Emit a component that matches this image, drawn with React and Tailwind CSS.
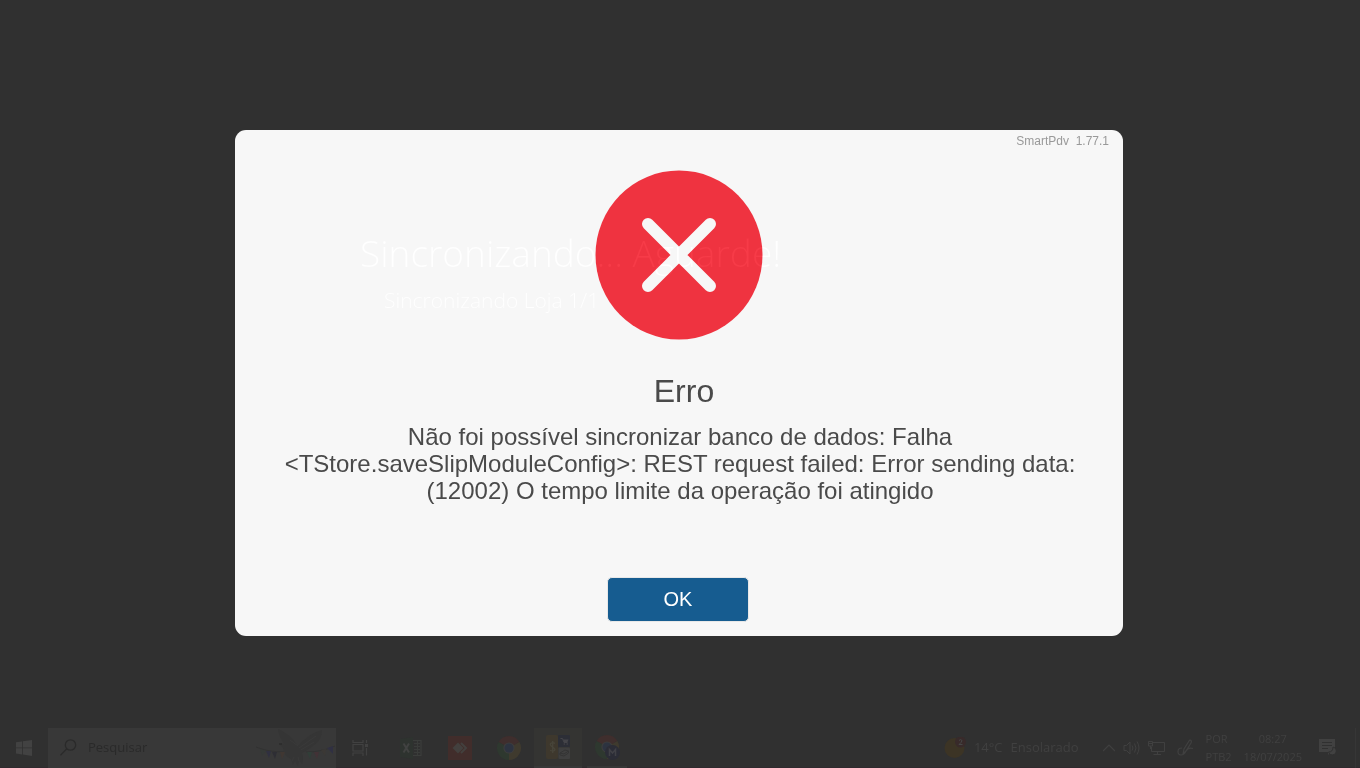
const MESSAGE = [
  'Não foi possível sincronizar banco de dados: Falha',
  '<TStore.saveSlipModuleConfig>: REST request failed: Error sending data:',
  '(12002) O tempo limite da operação foi atingido',
]

function ErrorIcon() {
  return (
    <svg width="168" height="170" viewBox="0 0 168 170" aria-hidden="true">
      <ellipse cx="84" cy="85" rx="83.5" ry="84.5" fill="#ef3340" />
      <path d="M53 54 115 116M115 54 53 116" stroke="#f7f7f7" strokeWidth="12" strokeLinecap="round" />
    </svg>
  )
}

function WindowsIcon() {
  return (
    <svg width="16" height="16" viewBox="0 0 16 16" fill="#424242">
      <path d="M0 2.3 6 1.4V7.4H0zM6.8 1.3 16 0V7.4H6.8zM0 8.2H6V14.4L0 13.6zM6.8 8.2H16V16L6.8 14.6z" />
    </svg>
  )
}

function SearchIcon() {
  return (
    <svg width="17" height="17" viewBox="0 0 17 17" fill="none" stroke="#2a2a2a" strokeWidth="1.3">
      <circle cx="10.5" cy="6" r="5.2" />
      <path d="M6.8 9.8.5 16.2" />
    </svg>
  )
}

function DoveArt() {
  return (
    <svg className="shrink-0" width="80" height="40" viewBox="0 0 80 40">
      <path d="M0 19Q12 24 28 24M50 24Q66 24 79 18" fill="none" stroke="#323232" />
      <path d="M23 16Q27 14 30 18Q23 10 22 1Q34 6 42 18Q52 6 66 2Q66 12 57 18Q52 22 46 25Q48 31 46 36L43 32 42 38 39 33 37 37 35 31Q28 28 27 20Q25 18 23 16z" fill="#353535" />
      <path d="M42 18 34 12M43 20 60 8M45 22 58 14M38 29 36 33M42 29 43 33" stroke="#3a3a3a" />
      <path d="M23 16H26" stroke="#262626" />
      <path d="M4 21 10 23 6 28z" fill="#353937" />
      <path d="M10 23H15L13 30z" fill="#303040" />
      <path d="M16 24H21L19 31z" fill="#2e2e34" />
      <path d="M24 24H29L26 31z" fill="#403732" />
      <path d="M51 24H56L54 31z" fill="#313e38" />
      <path d="M58 24H63L61 31z" fill="#423236" />
      <path d="M65 22 70 21 69 28z" fill="#3b3835" />
      <path d="M71 20 77 18V26z" fill="#303042" />
    </svg>
  )
}

function TaskViewIcon() {
  return (
    <svg width="17" height="16" viewBox="0 0 17 16" fill="none" stroke="#414141" strokeWidth="1.2">
      <path d="M1 0V2.5H11V0M1 16V13H11V16M1 4.5H11V11H1zM14.5 0V3M14.5 8V15.5" />
      <path d="M13 4H16V7H13z" fill="#414141" stroke="none" />
    </svg>
  )
}

function ExcelIcon() {
  return (
    <svg width="24" height="22" viewBox="0 0 24 22">
      <path d="M14 3.5H22V18.5H14" fill="none" stroke="#3b3d3b" strokeWidth="1.2" />
      <path d="M15 6.5H21M15 9.5H21M15 12.5H21M15 15.5H21M18.5 4V18" stroke="#3a3c3a" />
      <path d="M1 2 14 0V22L1 20z" fill="#2e332f" />
      <path d="M4.5 6.5 10 15.5M10 6.5 4.5 15.5" stroke="#414241" strokeWidth="2" />
    </svg>
  )
}

function AnyDeskIcon() {
  return (
    <svg width="24" height="24" viewBox="0 0 24 24">
      <path d="M0 0H24V24H0z" fill="#412d2b" />
      <path d="M4.5 12 10 6.5 15.5 12 10 17.5z" fill="#43403e" />
      <path d="M13 7 18 12 13 17" fill="none" stroke="#43403e" strokeWidth="2" />
    </svg>
  )
}

function ChromeIcon({ badge }) {
  return (
    <svg width="26" height="26" viewBox="0 0 26 26">
      <path d="M13 13 2.6 7A12 12 0 0 1 23.4 7z" fill="#3f2e2d" />
      <path d="M13 13 23.4 7A12 12 0 0 1 13 25z" fill="#3f3a2e" />
      <path d="M13 13V25A12 12 0 0 1 2.6 7z" fill="#2e382f" />
      <circle cx="13" cy="13" r="5.6" fill="#3d3d3d" />
      <circle cx="13" cy="13" r="4.5" fill="#2d3340" />
      {badge && (
        <>
          <circle cx="18.5" cy="18.5" r="7.5" fill="#2b2c36" />
          <path d="M15.5 22V15.5L18.5 19 21.5 15.5V22" fill="none" stroke="#404046" strokeWidth="1.5" />
        </>
      )}
    </svg>
  )
}

function PdvIcon() {
  return (
    <svg width="24" height="24" viewBox="0 0 24 24">
      <rect width="12" height="24" rx="2" fill="#3e382d" />
      <rect x="12" width="12" height="12" rx="1" fill="#2c2e36" />
      <rect x="12.5" y="12.5" width="11.5" height="11.5" rx="1" fill="#3f3f3f" />
      <path d="M9 8.5Q7 7 5 8.2T6.5 12 8.5 15.5 4 15.5M6.7 6V18" fill="none" stroke="#48453a" strokeWidth="1.3" />
      <path d="M14.5 3.5H16.5L18 7.5H21.5" fill="none" stroke="#444449" />
      <path d="M17 4.5H22.5L21.5 7H18z" fill="#444449" />
      <circle cx="18.3" cy="9" r="0.8" fill="#444449" />
      <circle cx="21.2" cy="9" r="0.8" fill="#444449" />
      <path d="M14 18 19 15 22.5 16 18 19zM14 18V20L18 21 22.5 18V16" fill="none" stroke="#343434" />
    </svg>
  )
}

function WeatherIcon() {
  return (
    <svg width="22" height="22" viewBox="0 0 22 22">
      <circle cx="10.5" cy="11" r="10" fill="#3c3425" />
      <circle cx="16.5" cy="5" r="5.5" fill="#382a2a" />
      <path d="M15 3.5Q16.5 1.8 18 3.5 18 5 15 7.5H18.5" fill="none" stroke="#464646" />
    </svg>
  )
}

function ChevronIcon() {
  return (
    <svg width="12" height="8" viewBox="0 0 12 8" fill="none" stroke="#404040" strokeWidth="1.2">
      <path d="M0 7 6 1 12 7" />
    </svg>
  )
}

function SpeakerIcon() {
  return (
    <svg width="17" height="16" viewBox="0 0 17 16" fill="none" stroke="#404040">
      <path d="M1 5.5H3.5L7 2V14L3.5 10.5H1zM9 5.5Q11 8 9 10.5M11.5 3.5Q14.5 8 11.5 12.5M14 1.5Q18 8 14 14.5" />
    </svg>
  )
}

function NetworkIcon() {
  return (
    <svg width="17" height="16" viewBox="0 0 17 16" fill="none" stroke="#404040">
      <path d="M5 2.5H16.5V11.5H3.5V7M9.5 11.5V14.5M5.5 14.5H13M.5 1.5H4.500V6H.5zM1 3.5H4M2.5 6V9" />
    </svg>
  )
}

function PenIcon() {
  return (
    <svg width="17" height="17" viewBox="0 0 17 17" fill="none" stroke="#404040" strokeWidth="1.2">
      <path d="M6 15 7 10 12 2Q13 .5 14 1.5T14 4L9 12zM5 9Q1 9 1 12.5T4 16Q7 16 9 12T16 9.5" />
    </svg>
  )
}

function NotificationIcon() {
  return (
    <svg width="17" height="17" viewBox="0 0 17 17">
      <path d="M0 0H16V13H12L9 16V13H0z" fill="#414141" />
      <path d="M3 3.5H13M3 6.5H13M3 9.5H9" stroke="#303030" />
      <path d="M14 8A4 4 0 1 1 9.5 13Q14 13 14 8z" fill="#414141" stroke="#303030" />
    </svg>
  )
}

function Taskbar() {
  const slot = 'flex h-10 w-12 shrink-0 items-center justify-center'

  return (
    <footer className="flex h-10 items-center justify-between border-b border-[#302a2e] font-['Open_Sans',sans-serif] text-[#404040]">
      <nav className="flex items-center" aria-label="Barra de tarefas">
        <button className={slot} aria-label="Iniciar"><WindowsIcon /></button>
        <label className="flex h-10 w-72 items-center bg-[#383838] pl-3">
          <SearchIcon />
          <input
            type="text"
            aria-label="Pesquisar"
            placeholder="Pesquisar"
            className="ml-[11px] w-0 flex-1 bg-transparent text-[13px] outline-none placeholder:text-[#2a2a2a]"
          />
          <DoveArt />
        </label>
        <button className={slot} aria-label="Visão de tarefas"><TaskViewIcon /></button>
        <div className="ml-[3px] flex gap-px">
          <button className={slot} aria-label="Excel"><ExcelIcon /></button>
          <button className={slot} aria-label="AnyDesk"><AnyDeskIcon /></button>
          <button className={slot} aria-label="Chrome"><ChromeIcon /></button>
          <button className="flex h-10 w-12 items-center justify-center border-b-2 border-[#383838] bg-[#343432]" aria-label="SmartPdv">
            <PdvIcon />
          </button>
          <button className="ml-1 flex h-10 w-10 items-center justify-center border-b-2 border-[#373737]" aria-label="Chrome M">
            <ChromeIcon badge />
          </button>
        </div>
      </nav>
      <div className="flex h-10 items-center">
        <button className="flex items-center text-[13px]">
          <WeatherIcon />
          <span className="ml-2">14°C</span>
          <span className="ml-2">Ensolarado</span>
        </button>
        <button className="ml-6" aria-label="Mostrar ícones ocultos"><ChevronIcon /></button>
        <button className="ml-2" aria-label="Volume"><SpeakerIcon /></button>
        <button className="ml-2" aria-label="Rede"><NetworkIcon /></button>
        <button className="ml-3" aria-label="Caneta"><PenIcon /></button>
        <button className="ml-3 text-left text-[11px] leading-[18px]">POR<br />PTB2</button>
        <button className="ml-3 text-center text-[11px] leading-[18px]">08:27<br />18/07/2025</button>
        <button className="ml-[17px] mr-[19px] h-10" aria-label="Notificações"><NotificationIcon /></button>
        <span className="mr-1 h-10 w-px bg-[#363636]" />
      </div>
    </footer>
  )
}

// plus-lighter lifts whatever lies under the text by the same small amount
function SyncStatus() {
  return (
    <div className="pointer-events-none absolute left-[125px] top-[96px] whitespace-nowrap font-['Open_Sans',sans-serif] font-light text-[#080808] mix-blend-plus-lighter">
      <p className="text-[37px] leading-[54px]">Sincronizando... Aguarde!</p>
      <p className="ml-6 text-[21px] leading-[40px]">Sincronizando Loja 1/1</p>
    </div>
  )
}

export default function App() {
  return (
    <div className="flex min-h-screen flex-col bg-[#303030] font-['Liberation_Sans',Arial,sans-serif]">
      <main className="flex flex-1 items-start justify-center pr-[18px] pl-4 pt-[130px]">
        <section
          role="alertdialog"
          aria-labelledby="error-title"
          aria-describedby="error-message"
          className="relative flex w-full max-w-[888px] flex-col items-center rounded-[11px] bg-[#f7f7f7] pb-[14px] text-[#4a4a4a]"
        >
          <p className="self-end pr-[14px] pt-[3px] text-xs leading-4 whitespace-pre text-[#999]">SmartPdv  1.77.1</p>
          <div className="mt-[21px]">
            <ErrorIcon />
          </div>
          <h1 id="error-title" className="ml-2.5 mt-[31px] text-[32px] leading-10">Erro</h1>
          <p id="error-message" className="ml-0.5 mt-3 text-center text-2xl leading-[27px]">
            {MESSAGE.map((line) => (
              <span key={line} className="block">{line}</span>
            ))}
          </p>
          <button className="mr-0.5 mt-[73px] h-[45px] w-[142px] rounded-[5px] border border-[#e8e8e8] bg-[#165c90] pb-0.5 text-xl text-white">
            OK
          </button>
          <SyncStatus />
        </section>
      </main>
      <Taskbar />
    </div>
  )
}
